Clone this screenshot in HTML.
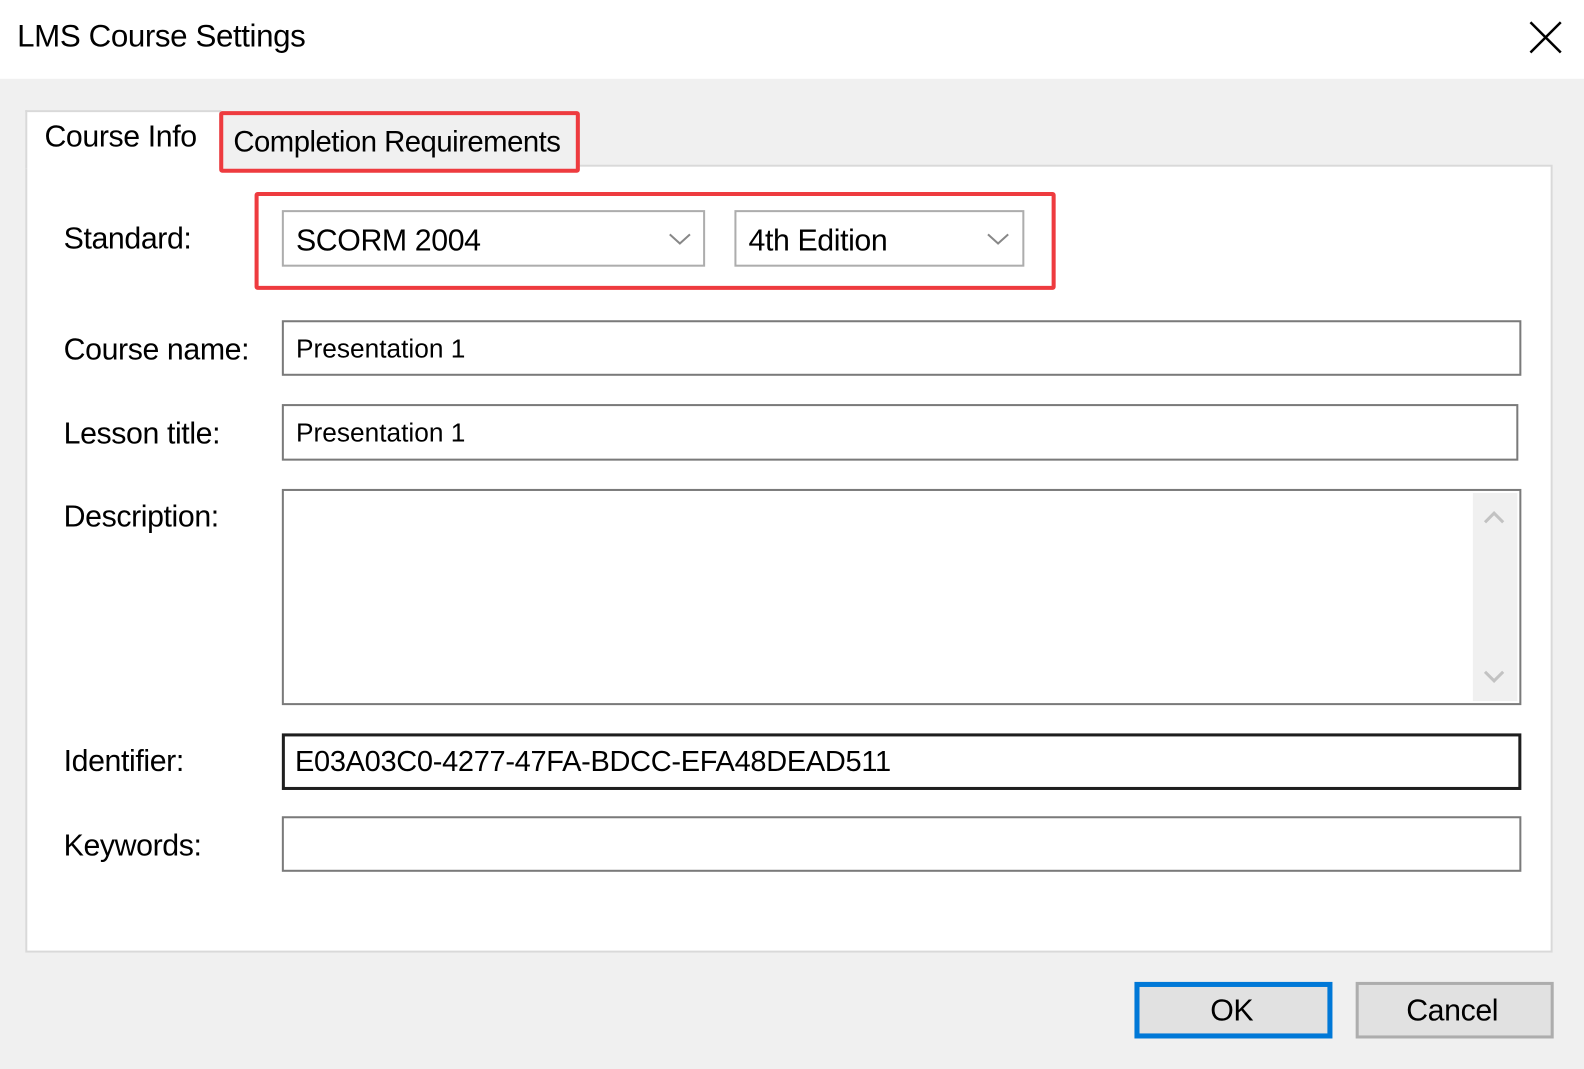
<!DOCTYPE html>
<html><head><meta charset="utf-8"><style>
*{box-sizing:border-box;margin:0;padding:0}
body{width:1584px;height:1068px;background:#f0f0f0;overflow:hidden;font-family:"Liberation Sans",sans-serif;color:#000}
#w{position:absolute;left:0;top:0;width:1568px;height:1058px;transform:scale(1.0102);transform-origin:0 0}
.a{position:absolute}
.t{position:absolute;font-size:30px;white-space:nowrap;letter-spacing:-0.4px}
.in{position:absolute;background:#fff;border:2px solid #7a7a7a}
.cb{position:absolute;background:#fff;border:2px solid #adadad}
.it{position:absolute;left:12px;top:11px;font-size:26px;white-space:nowrap}
</style></head><body><div id="w">
<div class="a" style="left:0;top:0;width:1584px;height:78px;background:#fff"></div>
<div class="t" style="left:17px;top:18px;font-size:31px">LMS Course Settings</div>
<svg class="a" style="left:1513px;top:20px" width="34" height="34"><path d="M2 2L32 32M32 2L2 32" stroke="#000" stroke-width="2.5"/></svg>

<div class="a" style="left:25px;top:163px;width:1512px;height:780px;background:#fff;border:2px solid #d9d9d9"></div>
<div class="a" style="left:25px;top:109px;width:194px;height:58px;background:#fff;border:2px solid #d9d9d9;border-bottom:none"></div>
<div class="t" style="left:44px;top:119px">Course Info</div>
<div class="a" style="left:217px;top:110px;width:357px;height:61px;border:4px solid #ee3b3f;border-radius:3px;background:#f0f0f0"></div>
<div class="t" style="left:231px;top:125px;font-size:29px;letter-spacing:-0.5px">Completion Requirements</div>

<div class="t" style="left:63px;top:220px">Standard:</div>
<div class="a" style="left:252px;top:190px;width:793px;height:97px;border:4px solid #ee3b3f;border-radius:3px"></div>
<div class="cb" style="left:279px;top:208px;width:419px;height:56px"><div class="t" style="left:12px;top:12px">SCORM 2004</div>
<svg class="a" style="left:380px;top:20px" width="24" height="14"><path d="M2 2L12 11L22 2" stroke="#888" stroke-width="2" fill="none"/></svg></div>
<div class="cb" style="left:727px;top:208px;width:287px;height:56px"><div class="t" style="left:12px;top:12px">4th Edition</div>
<svg class="a" style="left:247px;top:20px" width="24" height="14"><path d="M2 2L12 11L22 2" stroke="#888" stroke-width="2" fill="none"/></svg></div>

<div class="t" style="left:63px;top:330px">Course name:</div>
<div class="in" style="left:279px;top:317px;width:1227px;height:55px"><div class="it">Presentation 1</div></div>
<div class="t" style="left:63px;top:413px">Lesson title:</div>
<div class="in" style="left:279px;top:400px;width:1224px;height:56px"><div class="it">Presentation 1</div></div>
<div class="t" style="left:63px;top:495px">Description:</div>
<div class="in" style="left:279px;top:484px;width:1227px;height:214px">
<div class="a" style="right:2px;top:2px;width:44px;height:206px;background:#f0f0f0"></div>
<svg class="a" style="right:14px;top:18px" width="22" height="16"><path d="M2 13L11 4L20 13" stroke="#c2c2c2" stroke-width="3" fill="none"/></svg>
<svg class="a" style="right:14px;top:176px" width="22" height="16"><path d="M2 3L11 12L20 3" stroke="#c2c2c2" stroke-width="3" fill="none"/></svg>
</div>
<div class="t" style="left:63px;top:737px">Identifier:</div>
<div class="in" style="left:279px;top:726px;width:1227px;height:56px;border:3px solid #1e1e1e"><div class="t" style="left:10px;top:9px;font-size:28.7px;letter-spacing:-0.3px">E03A03C0-4277-47FA-BDCC-EFA48DEAD511</div></div>
<div class="t" style="left:63px;top:821px">Keywords:</div>
<div class="in" style="left:279px;top:808px;width:1227px;height:55px"></div>

<div class="a" style="left:1123px;top:972px;width:196px;height:56px;background:#e1e1e1;border:5px solid #0078d7"></div>
<div class="t" style="left:1198px;top:984px">OK</div>
<div class="a" style="left:1342px;top:972px;width:196px;height:56px;background:#e1e1e1;border:3px solid #adadad"></div>
<div class="t" style="left:1392px;top:984px">Cancel</div>
</div></body></html>
